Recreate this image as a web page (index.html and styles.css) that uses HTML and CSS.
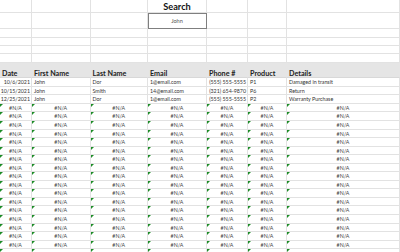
FILE: index.html
```html
<!DOCTYPE html>
<html>
<head>
<meta charset="utf-8">
<link rel="stylesheet" href="styles.css">
</head>
<body>
<div class="sheet">
  <div class="row r-title"><div class="cell"></div><div class="cell"></div><div class="cell"></div><div class="cell title">Search</div><div class="cell"></div><div class="cell"></div><div class="cell"></div></div>
  <div class="row r-box"><div class="cell"></div><div class="cell"></div><div class="cell"></div><div class="cell box">John</div><div class="cell"></div><div class="cell"></div><div class="cell"></div></div>
  <div class="row r-b1"><div class="cell"></div><div class="cell"></div><div class="cell"></div><div class="cell"></div><div class="cell"></div><div class="cell"></div><div class="cell"></div></div>
  <div class="row r-b2"><div class="cell"></div><div class="cell"></div><div class="cell"></div><div class="cell"></div><div class="cell"></div><div class="cell"></div><div class="cell"></div></div>
  <div class="row r-b2"><div class="cell"></div><div class="cell"></div><div class="cell"></div><div class="cell"></div><div class="cell"></div><div class="cell"></div><div class="cell"></div></div>
  <div class="row r-b3"><div class="cell"></div><div class="cell"></div><div class="cell"></div><div class="cell"></div><div class="cell"></div><div class="cell"></div><div class="cell"></div></div>
  <div class="row r-head"><div class="cell">Date</div><div class="cell">First Name</div><div class="cell">Last Name</div><div class="cell">Email</div><div class="cell">Phone #</div><div class="cell">Product</div><div class="cell">Details</div></div>
  <div class="row r-data"><div class="cell num">10/6/2021</div><div class="cell">John</div><div class="cell">Dor</div><div class="cell">1@email.com</div><div class="cell num">(555) 555-5555</div><div class="cell">P1</div><div class="cell">Damaged in transit</div></div>
  <div class="row r-data"><div class="cell num">10/15/2021</div><div class="cell">John</div><div class="cell">Smith</div><div class="cell">14@email.com</div><div class="cell num">(321) 654-9870</div><div class="cell">P6</div><div class="cell">Return</div></div>
  <div class="row r-data"><div class="cell num">12/25/2021</div><div class="cell">John</div><div class="cell">Dor</div><div class="cell">1@email.com</div><div class="cell num">(555) 555-5555</div><div class="cell">P2</div><div class="cell">Warranty Purchase</div></div>
  <div class="row r-data na"><div class="cell">#N/A</div><div class="cell">#N/A</div><div class="cell">#N/A</div><div class="cell">#N/A</div><div class="cell">#N/A</div><div class="cell">#N/A</div><div class="cell">#N/A</div></div>
  <div class="row r-data na"><div class="cell">#N/A</div><div class="cell">#N/A</div><div class="cell">#N/A</div><div class="cell">#N/A</div><div class="cell">#N/A</div><div class="cell">#N/A</div><div class="cell">#N/A</div></div>
  <div class="row r-data na"><div class="cell">#N/A</div><div class="cell">#N/A</div><div class="cell">#N/A</div><div class="cell">#N/A</div><div class="cell">#N/A</div><div class="cell">#N/A</div><div class="cell">#N/A</div></div>
  <div class="row r-data na"><div class="cell">#N/A</div><div class="cell">#N/A</div><div class="cell">#N/A</div><div class="cell">#N/A</div><div class="cell">#N/A</div><div class="cell">#N/A</div><div class="cell">#N/A</div></div>
  <div class="row r-data na"><div class="cell">#N/A</div><div class="cell">#N/A</div><div class="cell">#N/A</div><div class="cell">#N/A</div><div class="cell">#N/A</div><div class="cell">#N/A</div><div class="cell">#N/A</div></div>
  <div class="row r-data na"><div class="cell">#N/A</div><div class="cell">#N/A</div><div class="cell">#N/A</div><div class="cell">#N/A</div><div class="cell">#N/A</div><div class="cell">#N/A</div><div class="cell">#N/A</div></div>
  <div class="row r-data na"><div class="cell">#N/A</div><div class="cell">#N/A</div><div class="cell">#N/A</div><div class="cell">#N/A</div><div class="cell">#N/A</div><div class="cell">#N/A</div><div class="cell">#N/A</div></div>
  <div class="row r-data na"><div class="cell">#N/A</div><div class="cell">#N/A</div><div class="cell">#N/A</div><div class="cell">#N/A</div><div class="cell">#N/A</div><div class="cell">#N/A</div><div class="cell">#N/A</div></div>
  <div class="row r-data na"><div class="cell">#N/A</div><div class="cell">#N/A</div><div class="cell">#N/A</div><div class="cell">#N/A</div><div class="cell">#N/A</div><div class="cell">#N/A</div><div class="cell">#N/A</div></div>
  <div class="row r-data na"><div class="cell">#N/A</div><div class="cell">#N/A</div><div class="cell">#N/A</div><div class="cell">#N/A</div><div class="cell">#N/A</div><div class="cell">#N/A</div><div class="cell">#N/A</div></div>
  <div class="row r-data na"><div class="cell">#N/A</div><div class="cell">#N/A</div><div class="cell">#N/A</div><div class="cell">#N/A</div><div class="cell">#N/A</div><div class="cell">#N/A</div><div class="cell">#N/A</div></div>
  <div class="row r-data na"><div class="cell">#N/A</div><div class="cell">#N/A</div><div class="cell">#N/A</div><div class="cell">#N/A</div><div class="cell">#N/A</div><div class="cell">#N/A</div><div class="cell">#N/A</div></div>
  <div class="row r-data na"><div class="cell">#N/A</div><div class="cell">#N/A</div><div class="cell">#N/A</div><div class="cell">#N/A</div><div class="cell">#N/A</div><div class="cell">#N/A</div><div class="cell">#N/A</div></div>
  <div class="row r-data na"><div class="cell">#N/A</div><div class="cell">#N/A</div><div class="cell">#N/A</div><div class="cell">#N/A</div><div class="cell">#N/A</div><div class="cell">#N/A</div><div class="cell">#N/A</div></div>
  <div class="row r-data na"><div class="cell">#N/A</div><div class="cell">#N/A</div><div class="cell">#N/A</div><div class="cell">#N/A</div><div class="cell">#N/A</div><div class="cell">#N/A</div><div class="cell">#N/A</div></div>
  <div class="row r-data na"><div class="cell">#N/A</div><div class="cell">#N/A</div><div class="cell">#N/A</div><div class="cell">#N/A</div><div class="cell">#N/A</div><div class="cell">#N/A</div><div class="cell">#N/A</div></div>
  <div class="row r-data na"><div class="cell">#N/A</div><div class="cell">#N/A</div><div class="cell">#N/A</div><div class="cell">#N/A</div><div class="cell">#N/A</div><div class="cell">#N/A</div><div class="cell">#N/A</div></div>
  <div class="row r-data na"><div class="cell"></div><div class="cell"></div><div class="cell"></div><div class="cell"></div><div class="cell"></div><div class="cell"></div><div class="cell"></div></div>
</div>
</body>
</html>
```
FILE: styles.css
```css
html, body {
  margin: 0;
  padding: 0;
  background: #ffffff;
}
.sheet {
  width: 400px;
  height: 252px;
  overflow: hidden;
  font-family: Lato, "Open Sans", sans-serif;
  color: #333333;
}
.row {
  display: grid;
  grid-template-columns: 32px 58.5px 57.5px 59px 41px 39px 113px;
}
.cell {
  box-sizing: border-box;
  position: relative;
  display: flex;
  align-items: flex-end;
  justify-content: flex-start;
  padding: 0 0 0 2px;
  border-right: 1px solid #e2e2e2;
  border-bottom: 1px solid #e2e2e2;
  font-size: 5.3px;
  line-height: 1;
  white-space: nowrap;
  min-width: 0;
}
.r-title { height: 12.7px; }
.r-box { height: 16.6px; }
.r-b1 { height: 8.4px; }
.r-b2 { height: 8.3px; }
.r-b3 { height: 9px; }
.r-head { height: 15px; }
.r-data { height: 8.55px; }

.title {
  justify-content: center;
  padding: 0 0 0.5px 0;
  font-weight: 700;
  font-size: 9.2px;
  color: #111111;
}
.box {
  justify-content: center;
  align-items: center;
  padding: 0;
  outline: 1.2px solid #7f7f7f;
  outline-offset: -1px;
  font-size: 5.6px;
  color: #555555;
}
.r-head {
  background: #e5e5e5;
}
.r-head .cell {
  border-right-color: transparent;
  border-bottom-color: #d8d8d8;
  font-weight: 700;
  font-size: 7.2px;
  color: #222222;
  padding-bottom: 0;
}
.r-data .cell {
  padding-bottom: 0.3px;
}
.r-data .num {
  justify-content: flex-end;
  padding-right: 1px;
  padding-left: 0;
}
.na .cell {
  justify-content: center;
  padding-left: 0;
  color: #444444;
}
.na .cell::before {
  content: "";
  position: absolute;
  left: 0;
  top: 0;
  border-top: 3px solid #1c8c26;
  border-right: 3px solid transparent;
}
```
